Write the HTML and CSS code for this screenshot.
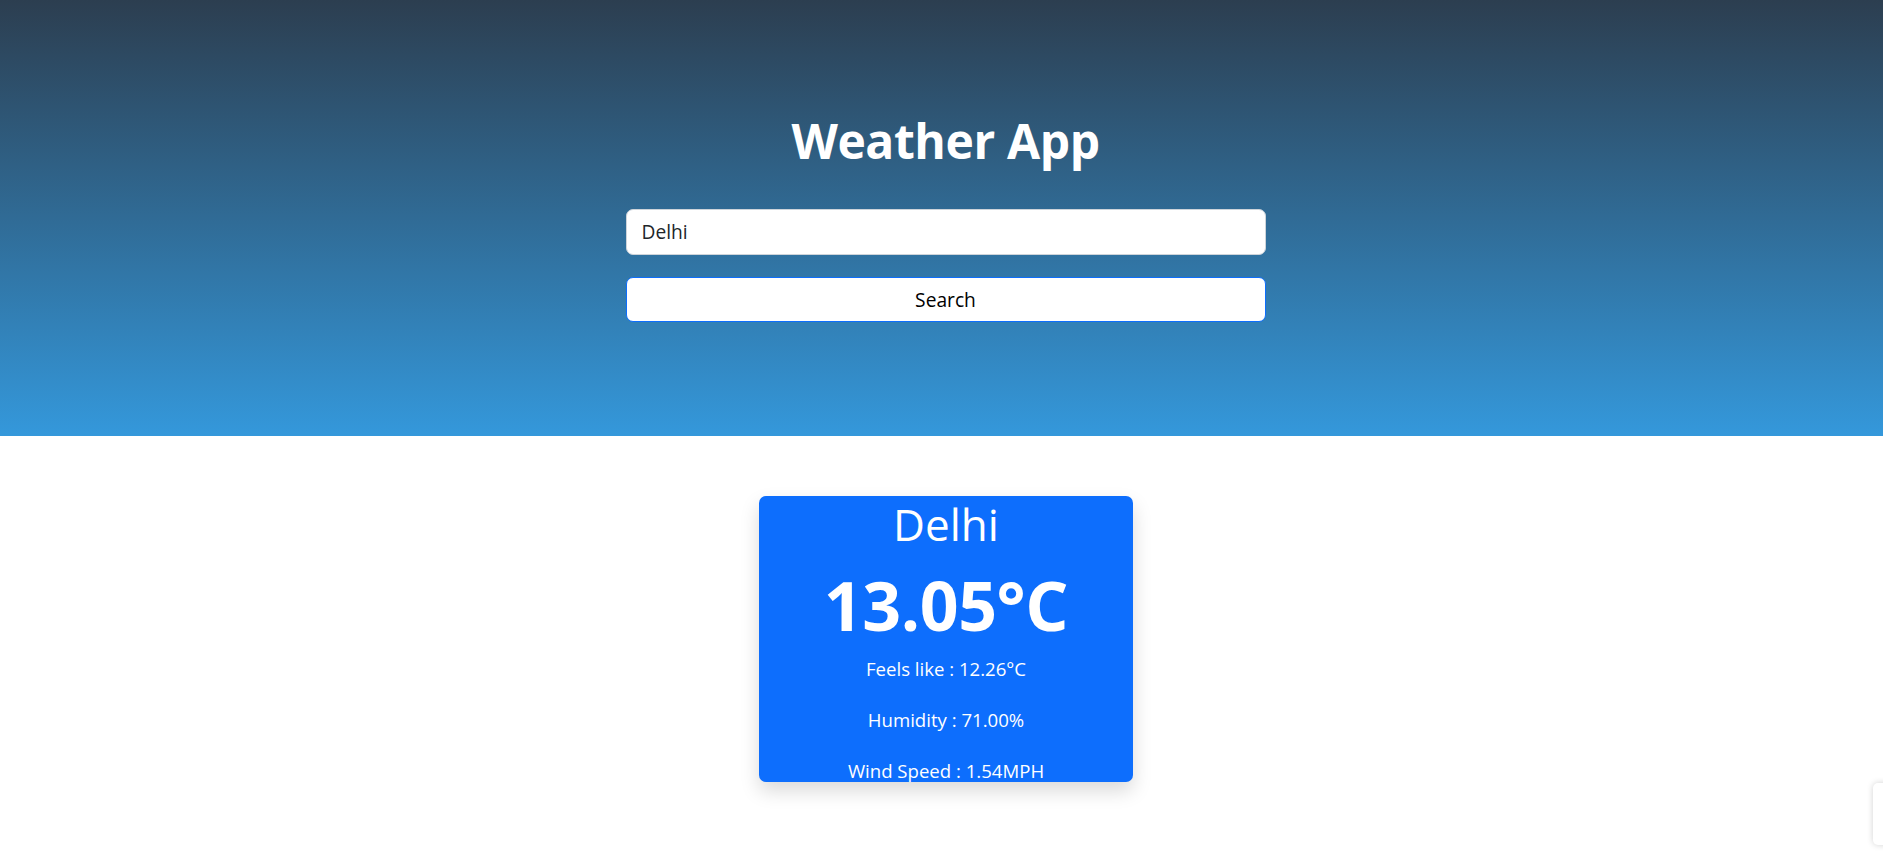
FILE: index.html
```html
<!DOCTYPE html>
<html lang="en">
<head>
<meta charset="utf-8">
<title>Weather App</title>
<link rel="stylesheet" href="styles.css">
</head>
<body>
  <header class="hero">
    <h1 class="hero-title">Weather App</h1>
    <form class="search-form">
      <input class="search-input" type="text" value="Delhi">
      <button class="search-btn" type="button">Search</button>
    </form>
  </header>
  <main class="content">
    <section class="card">
      <h2 class="city">Delhi</h2>
      <div class="temp">13.05°C</div>
      <p class="detail">Feels like : 12.26°C</p>
      <p class="detail">Humidity : 71.00%</p>
      <p class="detail">Wind Speed : 1.54MPH</p>
    </section>
  </main>
  <div class="corner-widget"></div>
</body>
</html>
```
FILE: styles.css
```css
* { box-sizing: border-box; }
html, body { margin: 0; padding: 0; }
body {
  font-family: "Open Sans", "Noto Sans", sans-serif;
  font-size: 19.2px;
  line-height: 1.5;
  color: #212529;
  background: #fff;
  overflow: hidden;
  height: 862px;
}
.hero {
  height: 436px;
  background: linear-gradient(180deg, #2c3e50 0%, #3498db 100%);
  display: flex;
  flex-direction: column;
  align-items: center;
  padding-top: 112px;
  padding-left: 8px;
}
.hero-title {
  margin: 0;
  font-size: 48px;
  font-weight: 700;
  line-height: 57.6px;
  color: #fff;
  letter-spacing: -0.4px;
}
.search-form {
  width: 640px;
  margin-top: 39px;
  display: flex;
  flex-direction: column;
  gap: 22px;
}
.search-input {
  height: 46px;
  width: 100%;
  border: 1px solid #ced4da;
  border-radius: 7px;
  padding: 0 15px;
  font-family: inherit;
  font-size: 19.2px;
  color: #212529;
  background: #fff;
  outline: none;
}
.search-btn {
  height: 45px;
  width: 100%;
  border: 1.2px solid #0d6efd;
  border-radius: 7px;
  background: #fff;
  color: #000;
  font-family: inherit;
  font-size: 19.2px;
  padding: 0;
}
.content {
  display: flex;
  justify-content: center;
  padding-top: 60px;
  padding-left: 9px;
}
.card {
  width: 374px;
  height: 286px;
  background: #0d6efd;
  border-radius: 7px;
  box-shadow: 0 9px 19px rgba(0, 0, 0, 0.15);
  color: #fff;
  text-align: center;
  display: flex;
  flex-direction: column;
  align-items: center;
}
.city {
  margin: 0;
  font-size: 44px;
  font-weight: 500;
  line-height: 56px;
}
.temp {
  margin-top: 10px;
  font-size: 68px;
  font-weight: 700;
  line-height: 85px;
  letter-spacing: -0.4px;
}
.detail {
  margin: 7px 0 0;
  font-size: 18.6px;
  line-height: 29px;
}
.detail + .detail { margin-top: 22px; }
.corner-widget {
  position: fixed;
  left: 1873px;
  top: 783px;
  width: 60px;
  height: 62px;
  background: #fff;
  border-radius: 5px;
  box-shadow: 0 0 6px rgba(0, 0, 0, 0.18);
}
```
